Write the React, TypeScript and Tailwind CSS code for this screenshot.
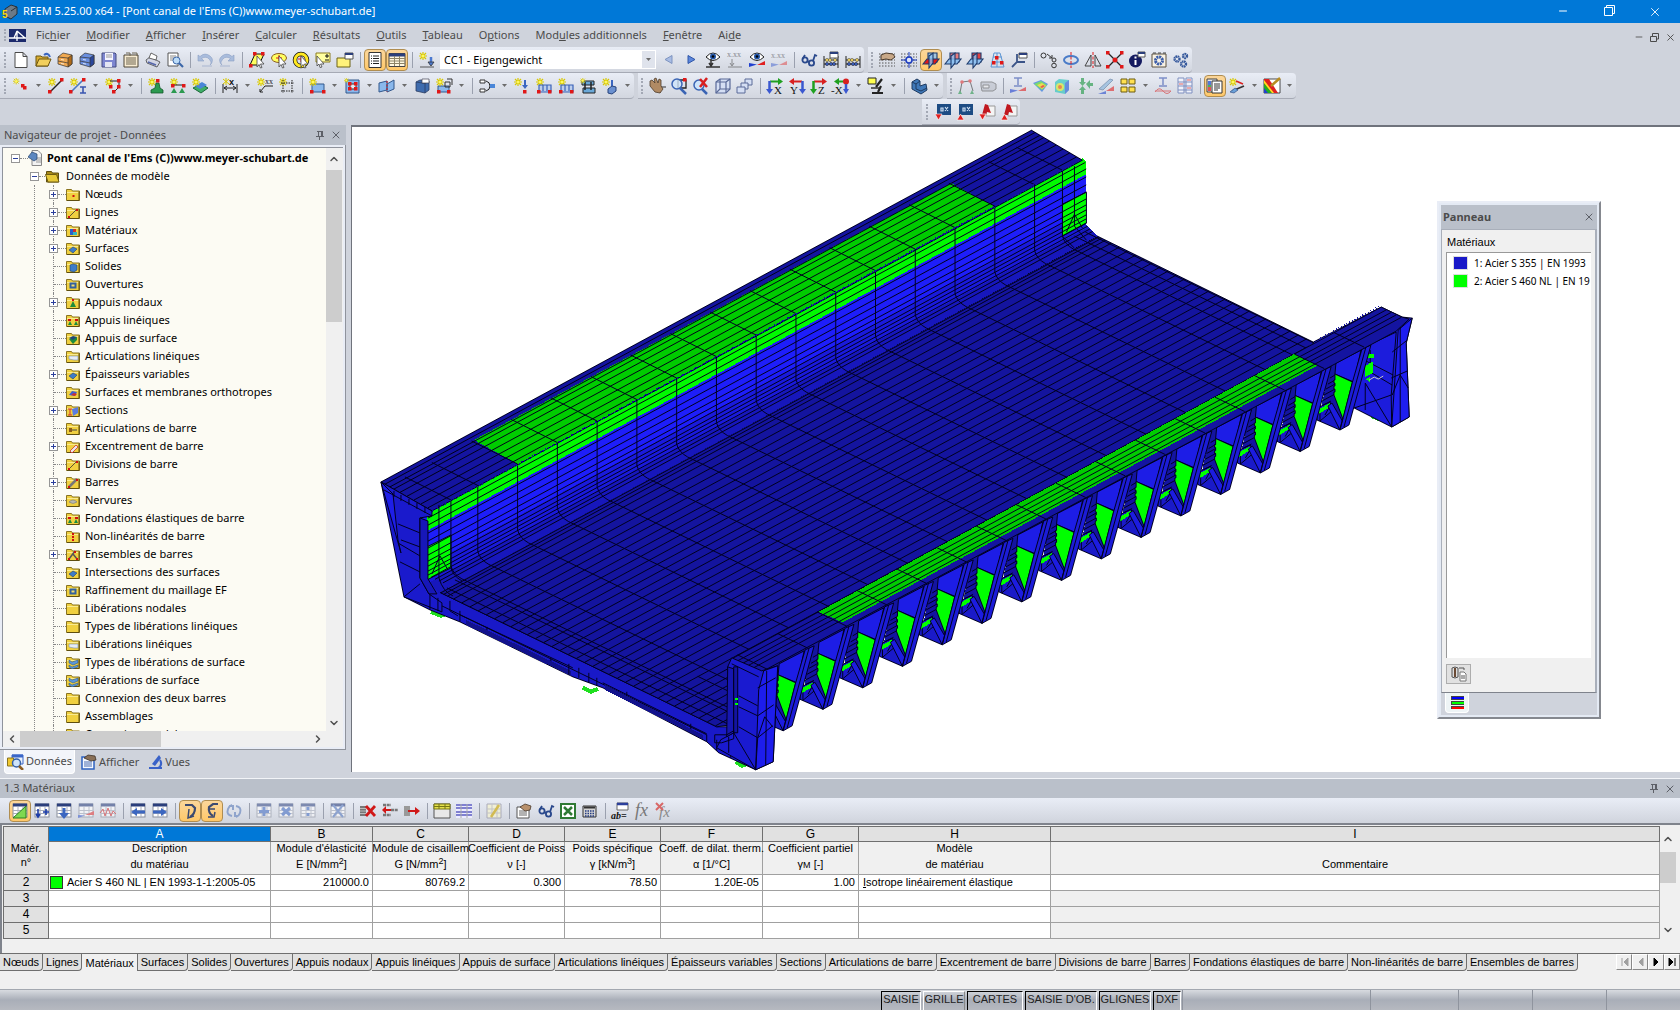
import type { ReactNode } from "react"
import { ChevronDown, ChevronLeft, ChevronRight, ChevronUp, Minus, X } from "lucide-react"

/* ---------- icon parts ---------- */

const Star = () => (
  <g stroke="#d8c800" strokeWidth="1.2">
    <path d="M4 0v8M0 4h8M1 1l6 6M7 1L1 7" />
    <circle cx="4" cy="4" r="1.5" fill="#fff860" stroke="none" />
  </g>
)

const Node = ({ x, y }: { x: number; y: number }) => <rect x={x} y={y} width="3.5" height="3.5" fill="#e01818" />

const Dots = () => (
  <path d="M0 2h16M0 5h16M0 8h16M0 11h16M0 14h16" stroke="#555" strokeDasharray="1.5 1.5" strokeWidth="1" />
)

const Sheet = ({ fill = "#fff" }: { fill?: string }) => (
  <g>
    <rect x="1" y="1" width="14" height="13" fill={fill} stroke="#8a8f9c" />
    <path d="M1 2h14" stroke="#2b3f7c" strokeWidth="3" />
    <path d="M1 7.500h14M1 10.500h14M6 4v10M11 4v10" stroke="#a9aebb" />
  </g>
)

const Cabinet = ({ a, b }: { a: string; b: string }) => (
  <g stroke="#333" strokeWidth=".7">
    <path d="M1 5l5-4 9 2v9l-4 3-10-3z" fill={a} />
    <path d="M11 6l4-3v9l-4 3z" fill={b} />
    <path d="M1 5l10 1M1 9l10 2" />
    <path d="M4 7.500l3 .5M4 11.500l3 .5" stroke="#fff" />
  </g>
)

const Box3d = ({ fill = "#5b8ac6" }: { fill?: string }) => (
  <g stroke="#2c3e62" strokeWidth=".8">
    <path d="M2 4l4-2 9 1v9l-4 3-9-2z" fill={fill} />
    <path d="M2 4l9 1.500V15M11 5.500L15 3" fill="none" />
  </g>
)

const Arrows = ({ a, b }: { a: string; b: string }) => (
  <g>
    <path d="M3 3.500h9" stroke={a} strokeWidth="2" />
    <path d="M11 0l5 3.500L11 7z" fill={a} />
    <path d="M2.500 3v9" stroke={b} strokeWidth="2.500" />
    <path d="M-1 11h7l-3.500 5z" fill={b} />
  </g>
)

const AxisName = ({ x, t }: { x: number; t: string }) => (
  <text x={x} y="16" fontSize="11" fontFamily="Liberation Serif" fill="#111">{t}</text>
)

const Planes = ({ a, b }: { a: string; b: string }) => (
  <g stroke="#1c3a6c" strokeWidth="1.100">
    <path d="M5 1h9v9H5z" fill={b} fillOpacity=".8" />
    <path d="M0 12l4-5h12l-4 5z" fill={a} />
    <path d="M6 4l4-3v10l-4 5z" fill="#8fc0f0" fillOpacity=".8" />
  </g>
)

const Eye = () => (
  <g>
    <path d="M1 5q7-8 14 0q-7 7-14 0z" fill="#fff" stroke="#222" />
    <circle cx="8" cy="4.500" r="3" fill="#2456a8" />
    <circle cx="8" cy="4.500" r="1.300" fill="#000" />
  </g>
)

const Abacus = () => (
  <g>
    <path d="M1 4v12M15 4v12M1 8h14M1 12h14" stroke="#222" />
    <g fill="#f0d060" stroke="#554" strokeWidth=".6"><circle cx="4" cy="8" r="1.600" /><circle cx="7" cy="8" r="1.600" /><circle cx="12" cy="8" r="1.600" /></g>
    <g fill="#3960c0" stroke="#223" strokeWidth=".6"><circle cx="4" cy="12" r="1.600" /><circle cx="8" cy="12" r="1.600" /><circle cx="11" cy="12" r="1.600" /></g>
  </g>
)

const Cursor = () => <path d="M8 4l7 8h-3.500l1.500 3.500-1.500.5-1.500-3.500L8 15z" fill="#fff" stroke="#444" strokeWidth=".8" />

const Arrow = ({ d = "M2 8h12" }: { d?: string }) => <path d={d} stroke="#3b66c0" strokeWidth="3" fill="none" />

const Glasses = () => (
  <g fill="none" stroke="#29488c" strokeWidth="1.800">
    <circle cx="4" cy="8" r="2.600" />
    <circle cx="10.500" cy="11" r="2.600" />
    <path d="M1.500 7L4 3M12 9l2-6 2 1M6.500 9L8 10" />
  </g>
)

const LoadFrame = () => (
  <g>
    <Star />
    <path d="M3 7h12v7H3zM7 7v6M11 7v6" fill="#9dbcf0" fillOpacity=".5" stroke="#3a62b8" strokeWidth="1.200" />
    <Node x={1} y={12} />
    <Node x={12} y={12} />
  </g>
)

/* toolbar icons, keyed by the command they stand for */
const icons: Record<string, ReactNode> = {
  Nouveau: <path d="M2 .5h8l4 4v11H2zM10 .5v4h4" fill="#fff" stroke="#4a4a4a" />,
  Ouvrir: (
    <g>
      <path d="M1 4h5l1 1h6v9H1z" fill="#d8ac30" stroke="#6b5410" />
      <path d="M1 14l3-7h12l-3 7z" fill="#f2cf5c" stroke="#6b5410" />
      <path d="M9 3q4-3 6 2" stroke="#3b66c0" strokeWidth="2" fill="none" />
    </g>
  ),
  "Gestionnaire de projets": <Cabinet a="#f0a850" b="#b06a18" />,
  "Gestionnaire de blocs": <Cabinet a="#6a8fe0" b="#2b479c" />,
  Enregistrer: (
    <g>
      <path d="M1 1h13l1 1v13H1z" fill="#7d86d0" stroke="#444a80" />
      <path d="M4 1h8v7H4z" fill="#f4f4ff" />
      <path d="M5 3h6M5 5h6" stroke="#999" />
      <path d="M4 10h7v5H4z" fill="#e4e6f4" />
    </g>
  ),
  Bordereau: (
    <g>
      <path d="M1 3h14v12H1z" fill="#f8ecd2" stroke="#4d4434" />
      <path d="M3 1h4v3M9 1h5v3M3 6h10M3 8h10M3 10h10M3 12h10" stroke="#6d6450" fill="none" />
    </g>
  ),
  Imprimer: (
    <g stroke="#444" strokeWidth=".8">
      <path d="M1 8l4-3 10 5-3 5-10-4z" fill="#d3d6e4" />
      <path d="M4 6l2-5 6 3-1 4z" fill="#fff" />
      <path d="M3 10l8 3" stroke="#5566aa" strokeWidth="1.500" />
    </g>
  ),
  "Aperçu": (
    <g>
      <path d="M1 1h10v13H1z" fill="#fff" stroke="#555" />
      <path d="M3 4h6M3 6h4M3 8h3" stroke="#888" />
      <circle cx="9.500" cy="8.500" r="3.500" fill="#bcdcf8" stroke="#3b66a8" />
      <path d="M12 11l4 4" stroke="#3b66a8" strokeWidth="2.200" />
    </g>
  ),
  Annuler: <path d="M1 3v6h6L4.500 6.500q5-3 8 1T13 13q5-5 0-9T3 4.500zM5 14h10" fill="#a9bcdc" stroke="#8ba0c4" strokeWidth=".6" />,
  "Rétablir": <path d="M15 3v6H9l2.500-2.500q-5-3-8 1T3 13q-5-5 0-9t10 .5zM1 14h10" fill="#a9bcdc" stroke="#8ba0c4" strokeWidth=".6" />,
  "Sélection parallélogramme": (
    <g>
      <path d="M1 13L6 2h9l-5 11z" fill="#ffff60" stroke="#111" />
      <Node x={4} y={0} /><Node x={12} y={0} /><Node x={0} y={12} />
      <Cursor />
    </g>
  ),
  "Sélection ellipse": (
    <g>
      <ellipse cx="8" cy="6" rx="7.500" ry="4.500" fill="#ffff60" stroke="#8c5c20" />
      <path d="M8 3v6M5 6h6" stroke="#e01818" />
      <Cursor />
    </g>
  ),
  "Sélection cercle": (
    <g>
      <circle cx="8" cy="8" r="6" fill="none" stroke="#111" strokeWidth="4.500" />
      <circle cx="8" cy="8" r="6" fill="none" stroke="#ffe820" strokeWidth="3" />
      <path d="M8 4v6M5 7h6" stroke="#e01818" />
      <Cursor />
    </g>
  ),
  "Sélection ajout": (
    <g>
      <path d="M1 1h14v9H1z" fill="#ffffa0" stroke="#8c7c20" />
      <path d="M10 4h4M12 2v4M10 8h4" stroke="#111" />
      <path d="M2 4l7 8H5.500L7 15l-2 .5L4 12l-2 2z" fill="#fff" stroke="#444" strokeWidth=".8" />
    </g>
  ),
  "Sélection spéciale": (
    <g>
      <path d="M0 6h13v9H0z" fill="#fff27a" stroke="#6d6214" />
      <path d="M8 1h8v6H8z" fill="#fff" stroke="#555" />
      <path d="M8 2h8" stroke="#2b3f7c" strokeWidth="2" />
    </g>
  ),
  Navigateur: (
    <g>
      <path d="M2 .5h12v15H2z" fill="#fff" stroke="#333" />
      <path d="M6 4h6M6 6.500h6M6 9h6M6 11.500h6M4 4h1M4 6.500h1M4 9h1M4 11.500h1" stroke="#222" />
    </g>
  ),
  Tableaux: (
    <g>
      <path d="M0 1.500h16v13H0z" fill="#fff8e0" stroke="#444" />
      <path d="M0 3h16" stroke="#2b3f7c" strokeWidth="3" />
      <path d="M0 6.500h16M0 9h16M0 11.500h16M5.500 4v10M10.500 4v10" stroke="#8d8468" />
    </g>
  ),
  "Nouveau cas de charge": (
    <g>
      <Star />
      <path d="M12 5v8" stroke="#4a78d0" strokeWidth="2.500" />
      <path d="M9 10h6l-3 4zM1 15h14" fill="#4a78d0" stroke="#333" strokeWidth=".8" />
    </g>
  ),
  "Précédent": <path d="M11 3.500v8L4 7.500z" fill="#a8bce4" stroke="#7e94c0" />,
  Suivant: <path d="M5 3.500v8l7-4z" fill="#5c86dc" stroke="#2f56a8" />,
  "Afficher charges": <g><Eye /><path d="M6 7v6M4 11l2 3 2-3M1 15h14" stroke="#333" strokeWidth="1.500" fill="none" /></g>,
  "Valeurs charges": (
    <g opacity=".55">
      <text x="0" y="5" fontSize="8" fontFamily="Liberation Serif" fill="#333">x.xx</text>
      <path d="M5 7v6M3 11l2 3 2-3M1 15h14" stroke="#444" fill="none" />
    </g>
  ),
  "Afficher résultats": (
    <g>
      <Eye />
      <path d="M0 15V11l8 1.500z" fill="#2040d0" />
      <path d="M8 13l8-4v4z" fill="#e02020" />
    </g>
  ),
  "Valeurs résultats": (
    <g opacity=".5">
      <text x="0" y="6" fontSize="8" fontFamily="Liberation Serif" fill="#333">x.xx</text>
      <path d="M0 15v-4l8 1.500z" fill="#4060d0" />
      <path d="M8 13l8-4v4z" fill="#e04040" />
    </g>
  ),
  Visionner: <Glasses />,
  "Paramètres de calcul": <g><Abacus /><path d="M7 0h8v6H7z" fill="#fff" stroke="#555" /><path d="M7 1h8" stroke="#2b3f7c" strokeWidth="2" /></g>,
  Calculer: <Abacus />,
  "Plan de travail": <g><Dots /><path d="M2 3l5-2 7 1 2 3-4 3-5-1-5 1z" fill="#c8a888" stroke="#4a3a2c" /></g>,
  "Grille ponctuelle": (
    <g>
      <Dots />
      <path d="M8 0v16M0 8h16" stroke="#1c3cc0" />
      <circle cx="8" cy="8" r="3" fill="#dfe6f8" stroke="#1c3cc0" strokeWidth="1.500" />
    </g>
  ),
  "Plan XY": <Planes a="#e01818" b="#8fc0f0" />,
  "Plan YZ": <Planes a="#8fc0f0" b="#e86060" />,
  "Plan XZ": <Planes a="#8fc0f0" b="#e01818" />,
  "Lignes guides": (
    <g>
      <path d="M2 15L5 1h6l4 14zM3 10h11M4 5h9M8 1v14" fill="none" stroke="#5a94d4" />
      <Node x={6} y={4} /><Node x={3} y={9} /><Node x={11} y={9} />
    </g>
  ),
  "Système de coordonnées": (
    <g>
      <path d="M6 2v8l-5 5M6 10h8" stroke="#3b5488" strokeWidth="1.800" fill="none" />
      <path d="M8 1h8v5H8z" fill="#fff" stroke="#555" />
      <path d="M8 2h8" stroke="#2b3f7c" strokeWidth="2" />
    </g>
  ),
  "Déplacer": (
    <g fill="none" stroke="#333">
      <circle cx="2.500" cy="3.500" r="2.500" /><circle cx="13" cy="8" r="2" /><circle cx="13" cy="13.500" r="2.300" />
      <path d="M6 2l5 4M11 3v3H8" />
    </g>
  ),
  Rotation: <g fill="none"><ellipse cx="8" cy="8" rx="7" ry="4" stroke="#4a7cc8" strokeWidth="2" /><path d="M8 0v16" stroke="#e01818" strokeDasharray="3 1.500" /></g>,
  Miroir: <g fill="none" stroke="#444"><path d="M6 3v11H0zM10 3v11h6z" /><path d="M8 0v16" stroke="#e01818" strokeDasharray="3 1.500" /></g>,
  Intersecter: (
    <g>
      <path d="M1 1l14 14M15 1L1 15" stroke="#222" strokeWidth="1.300" />
      <Node x={-1} y={-1} /><Node x={13} y={-1} /><Node x={-1} y={13} /><Node x={13} y={13} />
      <circle cx="8" cy="8" r="2.500" fill="#e01818" />
    </g>
  ),
  Informations: (
    <g>
      <circle cx="6.500" cy="9" r="6.500" fill="#141a60" />
      <path d="M6.500 8v5M6.500 4.500v2" stroke="#fff" strokeWidth="2" />
      <path d="M9 0h7v5H9z" fill="#fff" stroke="#555" />
      <path d="M9 1h7" stroke="#2b3f7c" strokeWidth="2" />
    </g>
  ),
  Afficher: (
    <g>
      <path d="M1 2h14v13H1z" fill="#f8f2e4" stroke="#5a5040" />
      <circle cx="8" cy="8.500" r="3.500" fill="none" stroke="#3a5ca8" strokeWidth="3" strokeDasharray="2 .7" />
      <path d="M2 1h3M7 1h3M12 1h3" stroke="#444" />
    </g>
  ),
  Options: (
    <g fill="none" stroke="#35589c" strokeWidth="2.400" strokeDasharray="1.500 .5">
      <circle cx="4" cy="7" r="2.500" /><circle cx="12" cy="4" r="2" /><circle cx="10.500" cy="12" r="2.500" />
    </g>
  ),
  "Nouveau nœud": <g><g transform="scale(.8)"><Star /></g><Node x={8} y={6} /><Node x={10} y={8} /></g>,
  "Nouvelle ligne": <g><Star /><path d="M2 14L14 2" stroke="#222" strokeWidth="1.400" /><Node x={0} y={12} /><Node x={12} y={0} /></g>,
  "Nouvelle barre": (
    <g>
      <Star />
      <path d="M1 14L13 2" stroke="#4a78c0" strokeWidth="1.600" />
      <Node x={-1} y={12} /><Node x={12} y={0} />
      <path d="M10 9h6M13 9v6M10 15h6" stroke="#3a56b0" strokeWidth="1.600" />
    </g>
  ),
  Polyligne: (
    <g>
      <Star />
      <path d="M5 3h9v6l-5 5" stroke="#222" fill="none" />
      <Node x={4} y={7} /><Node x={12} y={1} /><Node x={12} y={7} /><Node x={7} y={12} />
    </g>
  ),
  "Appui nodal": (
    <g>
      <Star />
      <path d="M8 5h3l1 5 3 2v3H3v-3l4-2z" fill="#2c9a50" stroke="#14582c" strokeWidth=".8" />
      <Node x={8} y={1} />
    </g>
  ),
  "Appui linéique": (
    <g>
      <Star />
      <path d="M3 7h12" stroke="#222" /><Node x={1} y={6} /><Node x={12} y={6} />
      <path d="M4 10l-3 5h6zM12 10l-3 5h6z" fill="#2c9a50" />
    </g>
  ),
  "Appui surfacique": <g><path d="M1 10l8-4 7 4-7 5z" fill="#3fae68" stroke="#1c6838" /><path d="M3 8l7-4 5 3-7 4z" fill="#4a86d8" /><Star /></g>,
  Dimension: (
    <g>
      <path d="M1 6v9M15 6v9M2 10h12M5 8l-3 2 3 2M11 8l3 2-3 2" stroke="#222" fill="none" />
      <path d="M1 1l6 5M7 1L1 6M4 0v7" stroke="#d8c800" />
      <text x="7" y="7" fontSize="9" fontWeight="bold" fontFamily="Liberation Sans" fill="#111">x</text>
    </g>
  ),
  Commentaire: (
    <g>
      <Star />
      <text x="8" y="6" fontSize="8" fontFamily="Liberation Serif" fill="#222">xx</text>
      <path d="M3 14l5-6h8M3 14v-3M3 14h3" stroke="#222" fill="none" />
    </g>
  ),
  "Trame de lignes": <g><Star /><path d="M4 2v13M13 2v13M2 5h13M2 13h13" stroke="#222" strokeDasharray="1.500 1" /></g>,
  Surface: <g><path d="M3 6h12v8H3z" fill="#8ab8ec" stroke="#33588c" /><Star /><Node x={1} y={12} /><Node x={13} y={12} /></g>,
  Ouverture: <g><path d="M2 2h13v13H2z" fill="#8ab8ec" stroke="#33588c" /><path d="M6 6h6v5H6z" fill="#e4eaf4" stroke="#333" /><Node x={4} y={4} /><Node x={10} y={4} /><Node x={4} y={9} /><Node x={10} y={9} /><g transform="scale(.6)"><Star /></g></g>,
  "Surface intersection": <g><path d="M0 5l8-2v9l-8 2zM8 6l7-4v9l-7 3z" fill="#8ab8ec" stroke="#33588c" /><path d="M8 3v11" stroke="#e01818" strokeDasharray="2 1.500" /></g>,
  Solide: <g><Box3d fill="#3f6cae" /><path d="M8 1h7v4H8z" fill="#fff" stroke="#445" strokeWidth=".7" /></g>,
  "Nouveau solide": <g><path d="M2 8h11v6H2z" fill="#8ab8ec" stroke="#33588c" /><path d="M9 4h5v5H9zM11 1h5v6" fill="none" stroke="#333" /><Star /><Node x={1} y={12} /><Node x={11} y={12} /></g>,
  Excentrement: <g><path d="M1 2h5v3H1zM1 11h5v3H1z" fill="#fff" stroke="#333" /><path d="M7 3q4 1 4 5t-4 5" stroke="#222" fill="none" /><path d="M11 6h5v4h-5z" fill="#4a86d8" /></g>,
  "Charge nodale": <g><Star /><path d="M11 2v6" stroke="#3b66c0" strokeWidth="2" /><path d="M8 7h6l-3 4z" fill="#3b66c0" /><Node x={9} y={12} /></g>,
  "Charge de barre": <LoadFrame />,
  "Charge linéique": <LoadFrame />,
  "Charge surfacique": <g><path d="M2 3h12v4H2zM3 10h12v5H3z" fill="#6aa8d8" stroke="#222" /><path d="M5 4v8M11 4v8" stroke="#222" strokeWidth="1.500" /><g transform="scale(.7)"><Star /></g></g>,
  "Charge libre": <g><Star /><path d="M10 2v6" stroke="#3b66c0" strokeWidth="2" /><path d="M6 11l4-3 4 1v4l-4 3-4-1z" fill="#6a90d0" stroke="#26437c" /></g>,
  "Déplacer la vue": (
    <g>
      <path d="M11 3v12M6 9h11" stroke="#333" />
      <path d="M1 3l2-1 3 3-1-4 2-1 2 5 1-4 2 1v6l2 3-3 4-5-1-5-6z" fill="#b08a64" stroke="#4d3b2a" strokeWidth=".8" />
    </g>
  ),
  "Zoom fenêtre": <g><path d="M7 2h8v8H7z" fill="none" stroke="#222" strokeWidth="1.300" /><circle cx="6" cy="6" r="5" fill="#cde4fa" fillOpacity=".8" stroke="#3a64b4" strokeWidth="1.500" /><path d="M9 10l6 6" stroke="#3a64b4" strokeWidth="2.500" /><Node x={12} y={0} /></g>,
  "Zoom précédent": <g><circle cx="6" cy="7" r="5" fill="#cde4fa" stroke="#3a64b4" strokeWidth="1.500" /><path d="M9 11l5 5" stroke="#3a64b4" strokeWidth="2.500" /><path d="M7 1l7 8M14 0L7 9" stroke="#d82020" strokeWidth="2.500" /></g>,
  "Vue isométrique": <g fill="#d5dff4" stroke="#5a6a98" strokeWidth="1.200"><path d="M1 4l4-3h10v10l-4 4H1z" /><path d="M1 4h10v11M11 4l4-3M5 1v10l-4 4M5 11h10" fill="none" /></g>,
  "Vue en perspective": <g fill="#d5dff4" stroke="#5a6a98"><path d="M8 1h7v6H8z" /><path d="M4 5h7v6H4z" /><path d="M0 9h8v6H0z" /></g>,
  "Vue en X": <g><Arrows a="#20a020" b="#3b58d0" /><AxisName x={7} t="X" /></g>,
  "Vue en Y": <g><g transform="translate(16 0) scale(-1 1)"><Arrows a="#d82020" b="#3b58d0" /></g><AxisName x={1} t="Y" /></g>,
  "Vue en Z": <g><Arrows a="#d82020" b="#20a020" /><AxisName x={7} t="Z" /></g>,
  "Vue en -X": (
    <g>
      <path d="M5 3.500h8" stroke="#20a020" strokeWidth="2" />
      <path d="M6 0L1 3.500 6 7z" fill="#20a020" />
      <circle cx="13" cy="3.500" r="3" fill="#d82020" />
      <path d="M13 6v6" stroke="#3b58d0" strokeWidth="2.500" />
      <path d="M10 11h6l-3 5z" fill="#3b58d0" />
      <AxisName x={-2} t="-X" />
    </g>
  ),
  "Visibilités": <g><path d="M0 0h8v6H0z" fill="#ffff50" stroke="#222" /><path d="M14 1L8 9M4 15h11M13 8l-3 6" stroke="#222" strokeWidth="2.200" /><path d="M3 10h8" stroke="#333" strokeWidth="1.500" /></g>,
  Rendu: <g><path d="M1 4l5-3 3 2v5l6-2 1 6-6 4-9-5z" fill="#3f78b8" stroke="#1e3a60" /><path d="M1 4l4 2v5l5 2 6-3M5 6l4-3" stroke="#1e3a60" fill="none" /></g>,
  "Résultats structure": <g opacity=".6"><path d="M2 15L4 4l8-1 3 10" fill="none" stroke="#333" /><circle cx="4" cy="4" r="1.800" fill="#e03030" /><circle cx="12" cy="3" r="1.800" fill="#e03030" /><path d="M2 12l-2 4h4zM14 12l-2 4h4z" fill="#2c9a50" /></g>,
  Animation: <g opacity=".55"><path d="M1 4h11l4 2v5l-3 2H2L1 8z" fill="#b8bcc6" stroke="#555" /><path d="M3 7h6v3H3z" fill="#eee" stroke="#555" /></g>,
  "Efforts internes": <g opacity=".6"><path d="M4 0h8M8 0v7M4 8h8" stroke="#3a56b0" strokeWidth="1.500" /><path d="M0 15v-4l8 1.500z" fill="#2040d0" /><path d="M8 13l8-4v4z" fill="#e02020" /></g>,
  "Résultats surfaces": <g opacity=".75"><path d="M1 5l8-3 7 4-6 8z" fill="#3c80e0" /><path d="M2 6l7-3 6 4-5 5z" fill="#58d848" /><path d="M5 7l5-2 4 3-4 3z" fill="#f0d820" /><path d="M8 9l3-2 2 1-3 2z" fill="#e83020" /></g>,
  "Résultats solides": <g opacity=".75"><path d="M1 4l4-3 10 1v10l-4 4-10-2z" fill="#40c8c0" /><path d="M11 5l4-3v10l-4 4z" fill="#4070d8" /><circle cx="6" cy="9" r="4" fill="#d8e840" /><circle cx="6" cy="9" r="2" fill="#f06820" /></g>,
  "Réactions": <g fill="#48a868" opacity=".8"><path d="M5 0h3v4h2l-3.500 4L3 4h2zM10 6l4-4v3h3v3h-3v3zM5 16v-4H3l3.500-4 3.500 4H8v4z" /></g>,
  "Contraintes": <g opacity=".7"><path d="M1 11L12 1l3 1L5 12z" fill="#8fb8dc" stroke="#4a6a90" strokeWidth=".7" /><path d="M0 16l8-3v3z" fill="#4060d0" /><path d="M8 13l8-5v5z" fill="#e04040" /></g>,
  "Fenêtres": <g fill="#ffe050" stroke="#6d5d10"><path d="M1 1h6v5H1zM9 1h6v5H9zM1 9h6v5H1zM9 9h6v5H9z" /></g>,
  "Diagramme": <g opacity=".6"><path d="M4 0h8M8 0v7M4 8h8" stroke="#3a56b0" strokeWidth="1.500" /><path d="M0 14q4-6 8-1t8 0M0 13h16" stroke="#d83030" fill="none" /></g>,
  "Palette": <g stroke="#7f8fc0" fill="#f0f2fa"><path d="M1 0h6v15H1zM9 0h6v15H9zM1 4h14M1 8h14M1 12h14" /><path d="M2 6h4M10 2h4M10 10h4" stroke="#e06060" /></g>,
  "Panneau de contrôle": (
    <g>
      <path d="M0 1h10v13H0z" fill="#e8e8e8" stroke="#444" />
      <path d="M1 4h3M1 6h3" stroke="#2050d0" strokeWidth="1.500" />
      <path d="M1 8h3" stroke="#20a020" strokeWidth="1.500" />
      <path d="M1 10h3M1 12h3" stroke="#e02020" strokeWidth="1.500" />
      <path d="M5 3h10v12H5z" fill="#fff" stroke="#333" />
      <path d="M7 6h6M7 8h6M7 10h6M7 12h4" stroke="#333" />
    </g>
  ),
  "Coupe": <g><Star /><path d="M7 3l7 3" stroke="#d82020" strokeWidth="1.500" /><path d="M3 13L15 8" stroke="#333" strokeWidth="1.800" /><path d="M1 14l5-4 3 2-4 3z" fill="#6aa0d8" stroke="#26437c" strokeWidth=".6" /></g>,
  "Échelle de couleurs": (
    <g>
      <path d="M0 1h16v14H0z" fill="#fff" stroke="#222" strokeWidth=".8" />
      <path d="M0 1h5l9 14H0z" fill="#e02020" />
      <path d="M0 5l8 10H0z" fill="#20b020" />
      <path d="M0 10l4 5H0z" fill="#2040d0" />
      <path d="M0 2l10 13H8L0 5z" fill="#ffe020" />
      <path d="M7 8l9-8" stroke="#b88c20" strokeWidth="2.500" />
    </g>
  ),
  "Exporter bas": <g><path d="M2 0h14v11H2z" fill="#1d4c84" /><path d="M6 4h2v3H6zM10 3l3 4M13 3l-3 4" stroke="#cfe0f4" strokeWidth="1.200" /><path d="M0 10h7l-3.500 6z" fill="#e02020" stroke="#fff" strokeWidth=".6" /></g>,
  "Exporter haut": <g><path d="M2 0h14v11H2z" fill="#1d4c84" /><path d="M6 4h2v3H6zM10 3l3 4M13 3l-3 4" stroke="#cfe0f4" strokeWidth="1.200" /><path d="M0 16h7l-3.500-6z" fill="#e02020" stroke="#fff" strokeWidth=".6" /></g>,
  "Importer CAO": <g><path d="M7 2h9v10H7z" fill="#f4f4f4" stroke="#999" /><path d="M3 11L6 0l3 1 3 8-4-1-1 3z" fill="#c01820" /><path d="M0 10h7l-3.500 6z" fill="#e02020" stroke="#fff" strokeWidth=".6" /></g>,
  "Exporter CAO": <g><path d="M7 2h9v10H7z" fill="#f4f4f4" stroke="#999" /><path d="M3 11L6 0l3 1 3 8-4-1-1 3z" fill="#c01820" /><path d="M0 16h7l-3.500-6z" fill="#e02020" stroke="#fff" strokeWidth=".6" /></g>,
  "Mode édition": <g><Sheet /><path d="M1 15L14 3v12z" fill="#7ed850" stroke="#2c8020" /></g>,
  "Insérer ligne": <g><Sheet /><path d="M4 6v8M2 11l2 3 2-3M9 9h6M12 6v6" stroke="#1c3ca8" strokeWidth="1.600" fill="none" /></g>,
  "Charger": <g><Sheet /><Arrow d="M8 5v6" /><path d="M3 10h10l-5 6z" fill="#3b66c0" /></g>,
  "Tableau résultats": <g opacity=".6"><Sheet /><path d="M0 15v-3l7 .5z" fill="#4060d0" /><path d="M7 12l9-4v4z" fill="#e04040" /></g>,
  "Courbe résultats": <g opacity=".6"><Sheet /><path d="M0 10l3-4 2 7 3-8 3 8 2-5 3 3" stroke="#d83030" fill="none" /></g>,
  "Colonne précédente": <g><Sheet /><Arrow d="M6 9h9" /><path d="M7 5v8L1 9z" fill="#3b66c0" /></g>,
  "Colonne suivante": <g><Sheet /><Arrow d="M1 9h9" /><path d="M9 5v8l6-4z" fill="#3b66c0" /></g>,
  "Sens sélection": <g><path d="M3 2h7l3 3q0 6-5 9" stroke="#3c4a70" strokeWidth="2.200" /><path d="M7 6l-1 9 6-2" stroke="#3c4a70" strokeWidth="1.500" /></g>,
  "Sens tableau": <g><path d="M14 1H9L5 4q-1 6 4 9" stroke="#3c4a70" strokeWidth="2.200" /><path d="M5 6h6M4 14h6l1-5" stroke="#3c4a70" strokeWidth="1.500" /></g>,
  "Synchroniser": <path d="M6 13Q0 12 2 6q1-3 4-4M10 3q6 1 4 7-1 3-4 4M3 3h4v4M13 13H9V9" stroke="#8fa4cc" strokeWidth="2" fill="none" />,
  "Ajouter": <g opacity=".55"><Sheet /><Arrow d="M8 4v9M3 8.500h10" /></g>,
  "Multiplier": <g opacity=".55"><Sheet /><Arrow d="M4 5l8 7M12 5l-8 7" /></g>,
  "Diviser": <g opacity=".55"><Sheet /><Arrow d="M8 4v3M8 10v3" /></g>,
  "Effacer sélection": <g opacity=".6"><Sheet /><path d="M3 2l10 12M13 2L3 14" stroke="#5a7cc0" strokeWidth="2" /></g>,
  "Supprimer ligne": <g><path d="M0 3h6v10H0z" fill="#777" /><path d="M0 5.500h6M0 8h6M0 10.500h6" stroke="#bbb" /><path d="M6 3l9 10M15 3L6 13" stroke="#d01818" strokeWidth="2.800" /></g>,
  "Insérer colonne": <g><path d="M9 7h7M1 12h8M1 2h8" stroke="#777" strokeWidth="2.500" strokeDasharray="3 .7" /><path d="M3 7h6" stroke="#d01818" strokeWidth="2" /><path d="M4 3v8L0 7z" fill="#d01818" /></g>,
  "Enlever colonne": <g><path d="M0 3h6v10H0z" fill="#999" /><path d="M4 8h8" stroke="#d01818" strokeWidth="2" /><path d="M11 4v8l5-4z" fill="#d01818" /></g>,
  "Colorer": <g><path d="M0 1h16v14H0z" fill="#e8e8e8" stroke="#555" /><path d="M0 1h16v5H0z" fill="#e4e04c" stroke="#777714" /><path d="M0 3.500h16M5 1v5M11 1v5" stroke="#777714" /></g>,
  "Colorer lignes": <g><path d="M0 1h16v14H0z" fill="#ececff" /><path d="M0 2h16M0 5h16M0 9h16M0 12h16" stroke="#7f80d0" strokeWidth="2.200" /><path d="M5 1v14M11 1v14" stroke="#aaa" /></g>,
  "Modifier cellule": <g opacity=".75"><path d="M1 1h14v14H1z" fill="#f5f3d0" stroke="#99a" /><path d="M1 6h14M1 10h14M6 1v14M11 1v14" stroke="#bbb" /><path d="M5 14l8-12" stroke="#d0b020" strokeWidth="2.500" /></g>,
  "Réglages tableau": <g><path d="M1 4h12v11H1z" fill="#fff" stroke="#555" /><path d="M3 8h8M3 10h8M3 12h8" stroke="#666" /><path d="M4 4l5-3 6 2-1 4-5 1z" fill="#b8906c" stroke="#4a3a2c" strokeWidth=".8" /></g>,
  "Vue tableau": <Glasses />,
  "Exporter Excel": <g><path d="M1 1h14v14H1z" fill="#fff" stroke="#2f7a34" strokeWidth="2" /><path d="M4 4l8 8M12 4l-8 8" stroke="#2f7a34" strokeWidth="2.500" /></g>,
  "Calculatrice": <g><path d="M1 3h13v11H1z" fill="#d4d4d4" stroke="#333" /><path d="M2 4.500h11" stroke="#333" strokeWidth="2" /><path d="M3 8h10M3 10.500h10M3 13h10" stroke="#223a80" strokeWidth="1.500" strokeDasharray="1.500 1" /></g>,
  "Paramètres": (
    <g>
      <path d="M5 0h11v7H5z" fill="#fff" stroke="#666" />
      <path d="M5 1h11" stroke="#2b3f9c" strokeWidth="2.500" />
      <text x="-1" y="16" fontSize="10" fontStyle="italic" fontWeight="bold" fontFamily="Liberation Serif" fill="#111">ab=</text>
    </g>
  ),
  "Formule": <text x="1" y="13" fontSize="18" fontStyle="italic" fontFamily="Liberation Serif" fill="#777">fx</text>,
  "Supprimer formule": (
    <g>
      <text x="3" y="14" fontSize="15" fontStyle="italic" fontFamily="Liberation Serif" fill="#888">fx</text>
      <path d="M0 0l7 7M7 0L0 7" stroke="#d86868" strokeWidth="2" />
    </g>
  ),
}

/* "|" = separator, leading "*" = pressed, leading "+" = with drop-down arrow */
const fileBar = [
  "Nouveau", "Ouvrir", "Gestionnaire de projets", "Gestionnaire de blocs", "Enregistrer", "Bordereau", "Imprimer", "Aperçu", "|",
  "Annuler", "Rétablir", "|", "Sélection parallélogramme", "Sélection ellipse", "Sélection cercle", "Sélection ajout", "Sélection spéciale", "|",
  "*Navigateur", "*Tableaux", "|", "Nouveau cas de charge",
]
const loadBar = [
  "Précédent", "Suivant", "Afficher charges", "Valeurs charges", "Afficher résultats", "Valeurs résultats", "|",
  "Visionner", "Paramètres de calcul", "Calculer",
]
const planeBar = [
  "Plan de travail", "Grille ponctuelle", "*Plan XY", "Plan YZ", "Plan XZ", "Lignes guides", "Système de coordonnées", "|",
  "Déplacer", "Rotation", "Miroir", "Intersecter", "Informations", "Afficher", "Options",
]
const insertBar = [
  "+Nouveau nœud", "Nouvelle ligne", "+Nouvelle barre", "+Polyligne", "|", "Appui nodal", "Appui linéique", "Appui surfacique", "|",
  "+Dimension", "Commentaire", "Trame de lignes", "|", "+Surface", "+Ouverture", "+Surface intersection", "Solide", "+Nouveau solide", "|",
  "+Excentrement", "Charge nodale", "Charge de barre", "Charge linéique", "Charge surfacique", "+Charge libre",
]
const viewBar = [
  "Déplacer la vue", "Zoom fenêtre", "Zoom précédent", "Vue isométrique", "Vue en perspective", "|",
  "Vue en X", "Vue en Y", "Vue en Z", "+Vue en -X", "+Visibilités", "|", "+Rendu",
]
const resultBar = [
  "Résultats structure", "Animation", "|", "Efforts internes", "Résultats surfaces", "Résultats solides", "Réactions", "Contraintes",
  "+Fenêtres", "Diagramme", "Palette", "|", "*Panneau de contrôle", "+Coupe", "+Échelle de couleurs",
]
const exportBar = ["Exporter bas", "Exporter haut", "Importer CAO", "Exporter CAO"]
const tableBar = [
  "*Mode édition", "Insérer ligne", "Charger", "Tableau résultats", "Courbe résultats", "|", "Colonne précédente", "Colonne suivante", "|",
  "*Sens sélection", "*Sens tableau", "Synchroniser", "|", "Ajouter", "Multiplier", "Diviser", "|", "Effacer sélection", "|",
  "Supprimer ligne", "Insérer colonne", "Enlever colonne", "|", "Colorer", "Colorer lignes", "|", "Modifier cellule", "|",
  "Réglages tableau", "Vue tableau", "Exporter Excel", "Calculatrice", "|", "Paramètres", "Formule", "Supprimer formule",
]

function Tools({ items }: { items: string[] }) {
  return (
    <>
      {items.map((raw, i) => {
        if (raw === "|") {
          return (
            <span key={i} className="flex w-2 shrink-0 justify-center">
              <span className="h-4 w-px bg-[#9aa0ae]" />
            </span>
          )
        }
        const on = raw[0] === "*"
        const drop = raw[0] === "+"
        const name = on || drop ? raw.slice(1) : raw
        return (
          <span key={i} className="flex shrink-0 items-center">
            <button
              aria-label={name}
              className={
                on
                  ? "flex h-[22px] w-[22px] items-center justify-center rounded-sm border border-[#b08d50] bg-gradient-to-b from-[#fbd69a] to-[#ffc868]"
                  : "flex h-[22px] w-[22px] items-center justify-center"
              }
            >
              <svg width="16" height="16" viewBox="0 0 16 16" fill="none" className="shrink-0 overflow-visible">
                {icons[name]}
              </svg>
            </button>
            {drop && (
              <button aria-label={`${name} : options`} className="flex w-[13px] items-center justify-center">
                <svg width="5" height="3" viewBox="0 0 5 3"><path d="M0 0h5L2.500 3z" fill="#6c6c6c" /></svg>
              </button>
            )}
          </span>
        )
      })}
    </>
  )
}

function Bar({ first, children }: { first?: boolean; children: ReactNode }) {
  return (
    <div className="flex h-[26px] shrink-0 items-center rounded-r border-b border-[#a6aab5] bg-gradient-to-b from-[#e9edf6] to-[#d2d6df]">
      <span className={first ? "flex w-[10px] justify-center" : "flex w-2 justify-center"}>
        <span className="h-4 w-0 border-l-2 border-dotted border-[#a3a8b4]" />
      </span>
      {children}
    </div>
  )
}

/* ---------- project tree ---------- */

const folderMarks: Record<string, ReactNode> = {
  dot: <rect x="6.500" y="7" width="2" height="2" fill="#d01010" />,
  line: <g><path d="M3 11l8-8" stroke="#333" strokeWidth=".8" /><path d="M2 10h2v2H2zM10 3h2v2h-2z" fill="#d01010" /></g>,
  mat: <g><path d="M4 5h3v6H4z" fill="#2a60c8" /><path d="M7 5h3v3H7z" fill="#d03030" /><path d="M7 8h4v3H7z" fill="#30b8c0" /></g>,
  surf: <path d="M3 8l4-3 4 2-4 4z" fill="#3d7cc8" stroke="#204070" strokeWidth=".6" />,
  solid: <path d="M4 5l3-1 4 1v5l-3 2-4-1z" fill="#3d7cc8" stroke="#204070" strokeWidth=".6" />,
  hole: <path d="M4.500 5.500h5v4h-5z" fill="#f0dc70" stroke="#33609c" strokeWidth="2" />,
  supp: <g><path d="M7 5l-3 6h6z" fill="#1c8c3c" /><path d="M6 3h2v2H6z" fill="#d01010" /></g>,
  suppl: <g><path d="M4 7l-2 4h4zM10 7l-2 4h4z" fill="#1c8c3c" /><path d="M2 5h3v2H2zM9 5h3v2H9z" fill="#d01010" /></g>,
  supps: <g><path d="M3 7l8-2v3l-4 4z" fill="#1c8c3c" /><path d="M3 6l4-2 4 1-4 3z" fill="#204878" /></g>,
  paper: <path d="M3 6h9v4H8L3 9z" fill="#e6ecf4" stroke="#7a90b0" strokeWidth=".6" />,
  ortho: <g><path d="M3 9l3-4 5 1-2 4z" fill="#4060d0" /><path d="M5 9l3-2 3 1-2 2z" fill="#d03030" /></g>,
  sect: <g><path d="M6 5l6-2v6l-5 3z" fill="#5a7ce0" /><path d="M2 5h4M4 5v6M2 11h4" stroke="#d03030" /></g>,
  hinge: <g><path d="M4 8h7" stroke="#444" /><path d="M3 6h3v4H3z" fill="#8c5c18" /></g>,
  ecc: <path d="M4 11l6-6 2 2-6 6z" fill="#e8e8e8" stroke="#d03030" strokeWidth=".8" />,
  set: <g><path d="M3 11l6-8M7 6l4 5" stroke="#555" strokeWidth="1.500" /><path d="M2 10h2v2H2zM8 3h2v2H8zM10 10h2v2h-2z" fill="#d01010" /></g>,
  bar: <g><path d="M3 11l8-8" stroke="#777" strokeWidth="2.500" /><path d="M2 10h2v2H2zM10 3h2v2h-2z" fill="#d01010" /></g>,
  rib: <path d="M3 8q4-4 8 0q-4 3-8 0z" fill="#b8b8b0" stroke="#777" strokeWidth=".6" />,
  nonl: <path d="M7 3v9" stroke="#d01010" strokeWidth="2" strokeDasharray="2 1" />,
  release: <path d="M3 4l3 2 6-2v3l-5 2-4-2zM3 9l3 2 6-2v2l-6 2-3-2z" fill="#5a98dc" stroke="#204878" strokeWidth=".5" />,
}

const tree: { t: string; m?: string; plus?: boolean }[] = [
  { t: "Nœuds", m: "dot", plus: true },
  { t: "Lignes", m: "line", plus: true },
  { t: "Matériaux", m: "mat", plus: true },
  { t: "Surfaces", m: "surf", plus: true },
  { t: "Solides", m: "solid" },
  { t: "Ouvertures", m: "hole" },
  { t: "Appuis nodaux", m: "supp", plus: true },
  { t: "Appuis linéiques", m: "suppl" },
  { t: "Appuis de surface", m: "supps" },
  { t: "Articulations linéiques", m: "paper" },
  { t: "Épaisseurs variables", m: "surf", plus: true },
  { t: "Surfaces et membranes orthotropes", m: "ortho" },
  { t: "Sections", m: "sect", plus: true },
  { t: "Articulations de barre", m: "hinge" },
  { t: "Excentrement de barre", m: "ecc", plus: true },
  { t: "Divisions de barre", m: "line" },
  { t: "Barres", m: "bar", plus: true },
  { t: "Nervures", m: "rib" },
  { t: "Fondations élastiques de barre", m: "suppl" },
  { t: "Non-linéarités de barre", m: "nonl" },
  { t: "Ensembles de barres", m: "set", plus: true },
  { t: "Intersections des surfaces", m: "surf" },
  { t: "Raffinement du maillage EF", m: "hole" },
  { t: "Libérations nodales" },
  { t: "Types de libérations linéiques" },
  { t: "Libérations linéiques", m: "paper" },
  { t: "Types de libérations de surface", m: "release" },
  { t: "Libérations de surface", m: "release" },
  { t: "Connexion des deux barres" },
  { t: "Assemblages" },
  { t: "Connexions nodales", m: "dot" },
]

function Folder({ children }: { children?: ReactNode }) {
  return (
    <svg width="14" height="13" viewBox="0 0 14 13" className="shrink-0">
      <path d="M.5 1.500h5l1 1.500h7v9.500H.5z" fill="#f0d040" stroke="#8a7420" />
      <path d="M1 4.500h11.500" stroke="#faeb90" />
      <path d="M13 3.500v9H1" stroke="#5e4e10" fill="none" />
      {children}
    </svg>
  )
}

function Toggle({ plus }: { plus?: boolean }) {
  return (
    <button
      aria-label={plus ? "Développer" : "Réduire"}
      className="flex h-[9px] w-[9px] shrink-0 items-center justify-center border border-[#969696] bg-white"
    >
      <svg width="5" height="5" viewBox="0 0 5 5" shapeRendering="crispEdges">
        <path d={plus ? "M0 2h5v1H0zM2 0h1v5H2z" : "M0 2h5v1H0z"} fill="#2b3f9c" />
      </svg>
    </button>
  )
}

function ProjectTree() {
  return (
    <ul className="overflow-hidden pt-px pl-2 text-[11px] leading-[18px] whitespace-nowrap text-black">
      <li>
        <div className="flex h-[18px] items-center font-bold">
          <Toggle />
          <span className="w-2 shrink-0 border-t border-dotted border-[#888]" />
          <svg width="14" height="16" viewBox="0 0 14 16" className="mr-[5px] shrink-0">
            <path d="M4 .5h6l3.500 3.500v11.500H4z" fill="#f2f2f2" stroke="#888" />
            <path d="M8 8h5M8 10h5M8 12h5" stroke="#999" />
            <path d="M0 7l4-5 5 2v5l-3 2z" fill="#5b86c0" stroke="#26436c" strokeWidth=".7" />
          </svg>
          <span>Pont canal de l'Ems (C))www.meyer-schubart.de</span>
        </div>
        <ul className="pl-[19px]">
          <li>
            <div className="flex h-[18px] items-center">
              <Toggle />
              <span className="w-1.5 shrink-0 border-t border-dotted border-[#888]" />
              <svg width="15" height="13" viewBox="0 0 15 13" className="mr-1.5 shrink-0">
                <path d="M1.500 1.500h5l1 1.500h6v9h-12z" fill="#a88a18" stroke="#5e4e10" />
                <path d="M.5 4.500h11l2.500 7.500H3z" fill="#e6c838" stroke="#6e5c10" />
              </svg>
              Données de modèle
            </div>
            <ul className="ml-1 border-l border-dotted border-[#888] pl-[18px]">
              {tree.map((n) => (
                <li key={n.t} className="flex h-[18px] items-center border-l border-dotted border-[#888]">
                  {n.plus ? (
                    <span className="-ml-[5px] flex items-center">
                      <Toggle plus />
                      <span className="w-2 border-t border-dotted border-[#888]" />
                    </span>
                  ) : (
                    <span className="w-3 border-t border-dotted border-[#888]" />
                  )}
                  <Folder>{n.m && folderMarks[n.m]}</Folder>
                  <span className="ml-[5px]">{n.t}</span>
                </li>
              ))}
            </ul>
          </li>
        </ul>
      </li>
    </ul>
  )
}

function Pin() {
  return (
    <svg width="8" height="9" viewBox="0 0 8 9" shapeRendering="crispEdges">
      <path d="M1 0h6v1H1zM2 1h1v4H2zM5 1h2v4H5zM0 5h8v1H0zM3 6h1v3H3z" fill="#5d6068" />
    </svg>
  )
}

function Navigator() {
  return (
    <aside className="flex w-[346px] shrink-0 flex-col">
      <div className="flex h-5 items-center justify-between bg-[#bac0ca] pr-1 pl-1 text-[11px] text-[#4b4b4b]">
        <h2>Navigateur de projet - Données</h2>
        <span className="flex items-center gap-1.5">
          <button aria-label="Épingler"><Pin /></button>
          <button aria-label="Fermer le navigateur"><X size={12} color="#5d6068" /></button>
        </span>
      </div>
      <div className="flex min-h-0 flex-1 flex-col border-r border-b border-[#8f939c] bg-[#e9edf6] p-0.5">
        <div className="flex min-h-0 flex-1 border-t border-l border-[#8f939c]">
          <div className="flex min-w-0 flex-1 flex-col bg-[#fcfbf3]">
            <div className="min-h-0 flex-1 overflow-hidden">
              <ProjectTree />
            </div>
            <div className="flex h-4 shrink-0 items-center bg-[#f0f0f0]">
              <span className="flex w-[17px] justify-center"><ChevronLeft size={12} strokeWidth={3} color="#505050" /></span>
              <span className="h-full w-[141px] bg-[#cdcdcd]" />
              <span className="ml-auto flex w-[17px] justify-center"><ChevronRight size={12} strokeWidth={3} color="#505050" /></span>
            </div>
          </div>
          <div className="flex w-[17px] shrink-0 flex-col items-center bg-[#f0f0f0] pr-px pb-[15px]">
            <span className="flex h-[22px] items-center"><ChevronUp size={12} strokeWidth={3} color="#505050" /></span>
            <span className="h-[152px] w-full bg-[#cdcdcd]" />
            <span className="mt-auto flex h-[18px] items-center"><ChevronDown size={12} strokeWidth={3} color="#505050" /></span>
          </div>
        </div>
      </div>
      <div className="flex h-[28px] shrink-0 items-start gap-1 pl-1 text-[11px] text-[#4b4b4b]">
        <button className="flex h-6 items-center gap-0.5 rounded-b border border-t-0 border-white bg-[#f3f5fa] px-0.5">
          <svg width="17" height="16" viewBox="0 0 17 16">
            <path d="M5 1h11v9H5z" fill="#e8f0fc" stroke="#3a66c8" />
            <path d="M5 2h11" stroke="#3a66c8" strokeWidth="3" />
            <path d="M.5 4h6v8h-6z" fill="#f0c830" stroke="#8a7420" />
            <circle cx="9.500" cy="9" r="4" fill="#cfe4fa" stroke="#3460a8" strokeWidth="1.500" />
            <path d="M12 12l4 4" stroke="#8c5c20" strokeWidth="2.500" />
          </svg>
          Données
        </button>
        <button className="flex h-6 items-center gap-0.5 px-0.5">
          <svg width="16" height="16" viewBox="0 0 16 16">
            <path d="M1 3h12v12H1z" fill="#f4f8ff" stroke="#2e62c0" strokeWidth="1.500" />
            <path d="M3 8h8M3 10h8M3 12h8" stroke="#4a6cb0" />
            <path d="M3 4l4-3 7 1 1 4-5 1z" fill="#8a7058" stroke="#40342a" strokeWidth=".8" />
          </svg>
          Afficher
        </button>
        <button className="flex h-6 items-center gap-0.5 px-1">
          <svg width="14" height="16" viewBox="0 0 14 16">
            <path d="M10 1L3 10l3 2L12 4z" fill="#3a62c8" />
            <path d="M0 14h13M11 6q3 5-2 8" stroke="#3a62c8" strokeWidth="2" fill="none" />
          </svg>
          Vues
        </button>
      </div>
    </aside>
  )
}

/* ---------- structural model ---------- */

const SLOPE = -0.541
const CROSS = 0.484

// segment that follows the long axis of the bridge, from x1 to x2, through (px, py)
const along = (px: number, py: number, x1: number, x2: number) =>
  `M${x1} ${(py + SLOPE * (x1 - px)).toFixed(1)}L${x2} ${(py + SLOPE * (x2 - px)).toFixed(1)}`

const range = (n: number, from = 0) => Array.from({ length: n }, (_, i) => i + from)

// long lines of the deck: dense by the haunch, regular further out
const deckLines = [2, 5, 9, ...range(33).map((i) => 15 + i * 8.4)]
  .map((d) => {
    const s = d / (CROSS - SLOPE)
    return along(438 + s, 592 + CROSS * s, 438 + s, 1097 + s)
  })
  .join("")

const topLines = [4, 9, 13, 19, 26, 33, 40, 47]
  .map((s) => along(380 + s, 482 + s * 0.55, 380 + s, 1031 + s))
  .join("")

const wallLines = [6, 13, 21, 29, 36, 43, 49, 54, 59, 63, 67, 71, 75, 79]
  .map((d) => along(431, 510 + d, 427 + Math.max(0, d - 64), 1086 + Math.max(0, d - 66)))
  .join("")

const frames = [...range(15, -1).map((i) => [994.3 - 39.8 * i, 206 + 21.5 * i]), [450, 500], [1062, 170]]
const frameLines = frames
  .map(([x, y]) => `M${x - 46} ${y - 23}L${x} ${y}v66q2 8 11 13l290 140`)
  .join("")

function Rib({ x, y }: { x: number; y: number }) {
  return (
    <g transform={`translate(${x} ${y})`}>
      <path d="M-10 -64L30 -86L9 -5L0 0L-21 -12z" fill="#1414a0" stroke="none" />
      <path d="M-23 -22L-10 -28L0 0L-23 -10z" fill="#1a1ac8" />
      <path d="M-4 -67L21 -80L14 -48L-5 -56z" fill="#1d1de6" />
      <path d="M-10 -52l5-3M-12 -46l7-4M-14 -41l9-5M-16 -35l11-6M-18 -29l13-7M-17 -25l8-4" fill="none" />
      <path d="M-5 -56L12.500 -48L3 -11L-6 -35v-3h1v-3h-1v-3h1v-3h-1v-3h1z" fill="#00ff00" />
      <path d="M-21 -21L-10 -27v4L-21 -16z" fill="#00ff00" stroke="none" />
      <path d="M-20 -17v8l12-10M-10 -24l-5 9" fill="none" />
      <path d="M-12 -24L-8 -27L3 -8L0 0z" fill="#1c1ce0" />
      <path d="M22 -81L31 -85L9 -5L0 0L12.500 -48z" fill="#1c1cd8" />
      <path d="M26 -83L4 -3M0 -1L3 -12" fill="none" />
    </g>
  )
}

function Model() {
  return (
    <svg
      viewBox="351 127 1329 645"
      role="img"
      aria-label="Modèle éléments finis du pont canal"
      shapeRendering="crispEdges"
      className="h-full w-full"
      stroke="#000022"
      strokeWidth="1"
      strokeLinejoin="round"
    >
      <defs>
        <clipPath id="deck"><path d="M438 592L1097 236L1313 342L1300 352L731 659L731 725L716 727z" /></clipPath>
        <clipPath id="inside"><path d="M380 482L1031 130L1086 163V225L1097 236L1330 350L731 660L731 727L716 727L438 594L426 579V515z" /></clipPath>
      </defs>

      {/* supports */}
      <path d="M430 612l10 4 6-2M582 688l8 4 7-3M735 762l6 4 6-2M1371 416l8 3" stroke="#20e020" strokeWidth="4" fill="none" />

      {/* deck edge, box girder below it */}
      <path d="M426 575L438 592L716 727L731 727L755 770L718 753L706 742L602 688L572 677L459 622L429 610L403 597z" fill="#1919c8" />
      <path d="M441 606L706 735M459 615L572 668M602 683L706 734M459 622V611M486 633v-6M550 664v-6M626 698v-6M690 730v-6" fill="none" />
      <path d="M465 620L570 671L570 676L465 625zM604 685L702 735L702 739L604 690z" fill="#12128c" stroke="none" />
      <path d="M449 601v10l8 5M568 664v11M578 668v10M588 673v10M596 678v8M706 735v7M716 740v11M730 745v13" fill="none" />

      {/* deck */}
      <path d="M438 592L1097 236L1313 342L1313 360L731 725L716 727z" fill="#14149e" />
      <g clipPath="url(#deck)">
        <path d={deckLines} fill="none" stroke="#00001e" />
      </g>

      {/* rear wall */}
      <path d="M419 518L1086 161V232L426 585z" fill="#1e1efa" stroke="none" />
      <path d="M426 579L1086 225L1097 236L438 593z" fill="#1717bc" stroke="none" />
      <path d="M426 565L1086 210V228L426 584z" fill="#1a1adc" stroke="none" />
      <path d="M426 513L1082 158l4 4v12L426 531z" fill="#00fa00" stroke="none" />
      <path d="M380 482L1031 130L1082 160L431 511z" fill="#1414a0" />
      <path d="M473 440L950.500 183L994 206L517 464z" fill="#00cc00" stroke="none" />
      <path d="M426 547L450 535V568L426 580zM1062 204L1086 192V223L1062 236z" fill="#00ff00" />
      <g clipPath="url(#inside)">
        <path d={topLines + wallLines} fill="none" stroke="#000018" />
        <path d={frameLines} fill="none" />
        <path d="M450 568q2 8 11 13M438 505v73q4 14 14 18M1074 166v60l12 14M1062 236l12 12M431 574l8-18 8 14M1066 232l8-18 8 14M454 580L744 720M446 588L735 728M1074 236L1310 350M1085 232L1318 345" fill="none" />
      </g>
      <path d={along(431, 511, 431, 1080)} stroke="#1414a0" strokeWidth="2" strokeDasharray="1 2" fill="none" />

      {/* left end of the rear wall */}
      <path d="M380 482L431 511L431 516L419 518V578L428 594L441 603V612L403 597z" fill="#1a1acc" />
      <path d="M380 482L392 494L397 540L400 553z" fill="#1e1ee8" />
      <path d="M419 518L427 521V579L436 594L428 594L419 578z" fill="#1717b8" />
      <path d="M383 490L431 516M397 524L419 533M400 540L419 547M397 543L419 556M399 562L419 572M403 597L419 584M429 595V610M437 598V611M393 491v6M400 495v6M408 499v6M416 503v6M424 507v6" fill="none" />

      {/* front wall, far pier */}
      <path d="M1313 342L1381 307L1402 317L1412 318L1406 343L1409 417L1391.500 427L1354 408L1330 365z" fill="#1c1cdc" />
      <path d="M1398 330L1412 318L1406 343L1409 417L1391.500 427z" fill="#1e1ef0" />
      <path d="M1364 347L1396 332L1391 395M1364 360L1393 375M1370 350V372L1392 385M1392 352L1407 340M1391 395L1354 408M1365 383L1391.500 427L1391 395M1391 378L1407 371M1392 395L1400 375L1408 388M1365 383V410M1400 325v97" fill="none" />
      <path d="M1366 354h8v4h-8zM1365 366l8-5v12l-8 4zM1365 379l5-2v5z" fill="#00ff00" stroke="none" />
      <path d="M1369 380l5-3 4 2 5-3" stroke="#c8c8c8" fill="none" />

      {/* front wall, ribs from far to near */}
      {range(15).map((k) => (
        <Rib key={k} x={1339.7 - 39.8 * k} y={430 + 21.5 * k} />
      ))}

      {/* front wall, top flange */}
      <path d="M731 659L1381 307L1402 317L1409 319L1396 331L761 672z" fill="#1414a0" />
      <path d="M818 612L1294 354L1317 365.500L842 622.500z" fill="#00cc00" stroke="none" />
      <path d={[5, 10, 15, 20].map((s) => along(731 + s, 659 + s * 0.5, 731 + s, 1381 + s)).join("")} fill="none" />
      <path d={range(17).map((i) => `M${1333.800 - 39.8 * i} ${332.500 + 21.500 * i}l30 14.500`).join("")} fill="none" />
      <path d={along(1313, 342, 1320, 1381)} stroke="#1414a0" strokeWidth="2" strokeDasharray="1 2" fill="none" />

      {/* front wall, near pier */}
      <path d="M727 667L731 658L761 671L777 666L772.500 762L755 770L716 748L720 740L733 733z" fill="#1a1ad0" />
      <path d="M758 690L763 671L777 666L772.500 762L755 770z" fill="#1d1dec" />
      <path d="M727 667L733 669V733L726 737z" fill="#1616b0" />
      <path d="M733 667h4v66h-4z" fill="#1414a0" />
      <path d="M734 699h3M734 704h3" stroke="#00ff00" strokeWidth="2" />
      <path d="M731 664L758 677M738 696L757 706M738 707L757 716M738 727L757 738L772 726M733 733L755 770L757 738M757 738L764 717L772 727M757 716L773 705M757 688L775 678M766 671L765 765M728 737V753M714 735h12l7-4v8l-12 4h-7z" fill="none" />
    </svg>
  )
}

/* ---------- floating panel ---------- */

function ControlPanel() {
  return (
    <section
      aria-label="Panneau"
      className="absolute top-[74px] right-[79px] flex h-[518px] w-[164px] flex-col border-2 border-t-[#e9edf6] border-r-[#85888f] border-b-[#85888f] border-l-[#e9edf6] bg-[#e4eaf4] p-0.5"
    >
      <div className="flex h-6 items-center justify-between bg-[#bac0ca] pr-0.5 pl-0.5 text-[11px] font-bold text-[#4b4b4b]">
        <h2>Panneau</h2>
        <button aria-label="Fermer le panneau"><X size={12} color="#5d6068" /></button>
      </div>
      <div className="flex min-h-0 flex-1 flex-col border border-r-2 border-b-[#7f838c] border-[#a9afba] bg-[#f0f0f0] px-1 pt-1 pb-2">
        <p className="mb-0.5 px-px font-['Liberation_Sans'] text-[11px] leading-4">Matériaux</p>
        <ul className="min-h-0 flex-1 overflow-hidden border-t border-l border-[#999] bg-white pt-px pl-1.5 text-[10px] leading-[18px] whitespace-nowrap">
          <li className="flex items-center gap-1.5">
            <span className="h-[14px] w-[15px] shrink-0 border border-[#ddd] bg-[#1919c8]" />
            1: Acier S 355 | EN 1993
          </li>
          <li className="flex items-center gap-1.5">
            <span className="h-[14px] w-[15px] shrink-0 border border-[#ddd] bg-[#00ff00]" />
            2: Acier S 460 NL | EN 19
          </li>
        </ul>
        <button aria-label="Couleurs" className="mt-1.5 flex h-5 w-[25px] items-center justify-center border border-[#adadad] bg-[#e1e1e1]">
          <svg width="16" height="16" viewBox="0 0 16 16">
            <path d="M1 2q3-2 6 0v9q-3 2-6 0z" fill="#ddd" stroke="#555" />
            <path d="M4 2v9" stroke="#6a4a34" strokeWidth="2" />
            <path d="M9 6h4l2 2v7H9z" fill="#fff" stroke="#777" />
            <path d="M10 10h4M10 12h4M8 2h5v2" stroke="#555" fill="none" />
          </svg>
        </button>
      </div>
      <div className="h-[22px] bg-[#cfd3dc] pl-1">
        <button aria-label="Légende des couleurs" className="flex h-5 w-6 items-center justify-center rounded-b border border-t-0 border-white bg-[#eef4f6]">
          <svg width="13" height="13" viewBox="0 0 13 13" shapeRendering="crispEdges">
            <path d="M0 0h13v3H0z" fill="#0000ff" stroke="#444" />
            <path d="M0 5h13v3H0z" fill="#00ff00" stroke="#444" />
            <path d="M0 10h13v3H0z" fill="#ff0000" stroke="#444" />
          </svg>
        </button>
      </div>
    </section>
  )
}

/* ---------- material table ---------- */

const columns: { l: string; a: string; b: ReactNode }[] = [
  { l: "A", a: "Description", b: "du matériau" },
  { l: "B", a: "Module d'élasticité", b: <>E [N/mm<sup className="text-[9px] leading-none">2</sup>]</> },
  { l: "C", a: "Module de cisaillem", b: <>G [N/mm<sup className="text-[9px] leading-none">2</sup>]</> },
  { l: "D", a: "Coefficient de Poiss", b: "ν [-]" },
  { l: "E", a: "Poids spécifique", b: <>γ [kN/m<sup className="text-[9px] leading-none">3</sup>]</> },
  { l: "F", a: "Coeff. de dilat. therm.", b: "α [1/°C]" },
  { l: "G", a: "Coefficient partiel", b: <>γ<span className="text-[9px]">M</span> [-]</> },
  { l: "H", a: "Modèle", b: "de matériau" },
  { l: "I", a: "", b: "Commentaire" },
]
const values = ["210000.0", "80769.2", "0.300", "78.50", "1.20E-05", "1.00"]

const sheets = [
  "Nœuds", "Lignes", "Matériaux", "Surfaces", "Solides", "Ouvertures", "Appuis nodaux", "Appuis linéiques", "Appuis de surface",
  "Articulations linéiques", "Épaisseurs variables", "Sections", "Articulations de barre", "Excentrement de barre", "Divisions de barre",
  "Barres", "Fondations élastiques de barre", "Non-linéarités de barre", "Ensembles de barres",
]

function MaterialTable() {
  const rowHead = "border border-[#6f6f6f] bg-[#e1e1e1] p-0 text-center font-normal text-[12px]"
  const cell = "border border-[#a0a0a0] bg-white p-0"
  return (
    <table className="w-full table-fixed border-collapse text-[11px] leading-[15px] whitespace-nowrap text-black">
      <colgroup>
        <col className="w-[45px]" />
        <col className="w-[222px]" />
        <col className="w-[102px]" />
        <col className="w-[96px]" />
        <col className="w-[96px]" />
        <col className="w-[96px]" />
        <col className="w-[102px]" />
        <col className="w-[96px]" />
        <col className="w-[192px]" />
        <col />
      </colgroup>
      <thead>
        <tr className="h-[15px]">
          <th rowSpan={2} className="border border-[#6f6f6f] bg-[#e1e1e1] p-0 pt-2 text-[11px] leading-[14px] font-normal">
            Matér.<br />n°
          </th>
          {columns.map((c) => (
            <th
              key={c.l}
              className={
                c.l === "A"
                  ? "border border-[#6f6f6f] bg-[#0078d7] p-0 text-[12px] leading-[14px] font-normal text-white"
                  : "border border-[#6f6f6f] bg-[#e1e1e1] p-0 text-[12px] leading-[14px] font-normal"
              }
            >
              {c.l}
            </th>
          ))}
        </tr>
        <tr className="h-[33px]">
          {columns.map((c) => (
            <th key={c.l} className="border border-[#a0a0a0] bg-[#f0f0f0] p-0 align-top leading-[13px] font-normal">
              <span className="mb-[3px] flex h-[13px] justify-center">{c.a}</span>
              <span className="block h-[13px]">{c.b}</span>
            </th>
          ))}
        </tr>
      </thead>
      <tbody>
        <tr className="h-4">
          <th className={rowHead}>2</th>
          <td className={cell}>
            <span className="flex items-center gap-1 pl-px">
              <span className="h-[13px] w-[13px] border border-[#333] bg-[#00ff00]" />
              Acier S 460 NL | EN 1993-1-1:2005-05
            </span>
          </td>
          {values.map((v) => (
            <td key={v} className={cell}><span className="block pr-[3px] text-right">{v}</span></td>
          ))}
          <td className={cell}><span className="block pl-1"><u>I</u>sotrope linéairement élastique</span></td>
          <td className={cell} />
        </tr>
        {[3, 4, 5].map((r) => (
          <tr key={r} className="h-4">
            <th className={rowHead}>{r}</th>
            {range(8).map((c) => <td key={c} className={cell} />)}
            <td className="border border-[#a0a0a0] bg-[#f0f0f0] p-0" />
          </tr>
        ))}
      </tbody>
    </table>
  )
}

function TablePane() {
  return (
    <section className="flex shrink-0 flex-col font-['Liberation_Sans',sans-serif]">
      <div className="flex h-5 items-center justify-between border-t border-[#f2f4f8] bg-[#bac0ca] pr-1 pl-1 font-['Noto_Sans',sans-serif] text-[11px] text-[#4b4b4b]">
        <h2>1.3 Matériaux</h2>
        <span className="flex items-center gap-1.5">
          <button aria-label="Épingler"><Pin /></button>
          <button aria-label="Fermer le tableau"><X size={12} color="#5d6068" /></button>
        </span>
      </div>
      <div className="flex h-[25px] items-center bg-gradient-to-b from-[#e9edf6] to-[#d0d4dd] pl-[9px]">
        <Tools items={tableBar} />
      </div>
      <div className="flex h-[130px] items-start border-t-2 border-l-2 border-[#7f838c] bg-[#f0f0f0] pt-px pr-1 pl-px">
        <div className="min-w-0 flex-1"><MaterialTable /></div>
        <div className="flex h-[112px] w-4 shrink-0 flex-col items-center">
          <span className="flex h-[26px] items-center"><ChevronUp size={12} strokeWidth={3} color="#505050" /></span>
          <span className="h-[31px] w-full bg-[#cdcdcd]" />
          <span className="mt-auto flex h-4 items-center"><ChevronDown size={12} strokeWidth={3} color="#505050" /></span>
        </div>
      </div>
      <div className="flex h-[36px] items-start border-t border-[#6f6f6f] bg-[#f0f0f0] text-[11px] leading-4 whitespace-nowrap text-black">
        <nav className="flex">
          {sheets.map((s) => (
            <button
              key={s}
              className={
                s === "Matériaux"
                  ? "h-[17px] border-r border-[#6f6f6f] bg-[#f0f0f0] px-[3px]"
                  : "h-[17px] rounded-br border-r border-b border-[#6f6f6f] bg-[#e1e1e1] px-[3px]"
              }
            >
              {s}
            </button>
          ))}
        </nav>
        <span className="ml-auto flex">
          {["M3 1v8M9 1L5 5l4 4z", "M8 1L4 5l4 4z", "M3 1l4 4-4 4z", "M2 1l4 4-4 4zM8 1v8"].map((d, i) => (
            <button key={d} aria-label={["Premier", "Précédent", "Suivant", "Dernier"][i]} className="flex h-4 w-4 items-center justify-center border border-t-white border-r-[#888] border-b-[#888] border-l-white">
              <svg width="10" height="10" viewBox="0 0 10 10"><path d={d} fill={i < 2 ? "#a0a0a0" : "#000"} stroke={i < 2 ? "#a0a0a0" : "#000"} /></svg>
            </button>
          ))}
        </span>
      </div>
    </section>
  )
}

/* ---------- window ---------- */

const menus: [string, string, string][] = [
  ["Fic", "h", "ier"], ["", "M", "odifier"], ["", "A", "fficher"], ["", "I", "nsérer"], ["", "C", "alculer"], ["", "R", "ésultats"],
  ["", "O", "utils"], ["", "T", "ableau"], ["O", "p", "tions"], ["Mod", "u", "les additionnels"], ["", "F", "enêtre"], ["Ai", "d", "e"],
]

export default function App() {
  return (
    <div className="flex h-screen flex-col overflow-hidden bg-[#cfd3dc] font-['Noto_Sans',sans-serif]">
      <header className="flex h-[23px] shrink-0 items-center bg-[#0078d7] text-[11px] text-white">
        <svg width="16" height="16" viewBox="0 0 16 16" className="mr-[5px] ml-0.5">
          <path d="M3 5l6-4 6 2v7l-6 5-6-3z" fill="#6b7a88" stroke="#26303a" />
          <path d="M9 7l6-4" stroke="#26303a" />
          <text x="0" y="14" fontSize="10" fontWeight="bold" fontFamily="Liberation Sans" fill="#ffd800">5</text>
        </svg>
        <h1>RFEM 5.25.00 x64 - [Pont canal de l'Ems (C))www.meyer-schubart.de]</h1>
        <div className="ml-auto flex pr-0.5">
          <button aria-label="Réduire la fenêtre" className="flex w-[46px] justify-center"><Minus size={12} strokeWidth={2} /></button>
          <button aria-label="Restaurer" className="flex w-[46px] justify-center">
            <svg width="11" height="11" viewBox="0 0 11 11" fill="none" stroke="#fff"><path d="M.5 2.500h8v8h-8zM2.500 2.500v-2h8v8h-2" /></svg>
          </button>
          <button aria-label="Fermer" className="flex w-[46px] justify-center"><X size={14} strokeWidth={1.5} /></button>
        </div>
      </header>

      <nav className="flex h-6 shrink-0 items-center text-[11px] text-[#4b4b4b]">
        <span className="mr-[3px] ml-1 h-3 border-l-2 border-dotted border-[#a3a8b4]" />
        <svg width="17" height="13" viewBox="0 0 17 13" className="mr-0.5">
          <path d="M0 0h17v13H0z" fill="#1c2a6c" />
          <path d="M0 9h17M5 9l3-7v10M8 2l8 7" stroke="#fff" strokeWidth="1.300" fill="none" />
        </svg>
        {menus.map(([a, k, b]) => (
          <button key={k + b} className="px-2">{a}<u>{k}</u>{b}</button>
        ))}
        <span className="ml-auto flex items-center gap-1.5 pt-1 pr-1">
          <button aria-label="Réduire le document"><Minus size={10} /></button>
          <button aria-label="Restaurer le document">
            <svg width="9" height="9" viewBox="0 0 9 9" fill="none" stroke="#4b4b4b"><path d="M.5 3.500h6v5h-6zM2.500 3V.5h6V6h-2" /></svg>
          </button>
          <button aria-label="Fermer le document"><X size={11} /></button>
        </span>
      </nav>

      <div className="flex h-[26px] shrink-0 gap-1">
        <Bar first>
          <Tools items={fileBar} />
          <div className="relative mx-0.5 flex h-[19px] w-[216px]">
            <select aria-label="Cas de charge" className="block w-full appearance-none bg-white px-1 text-[11px] leading-[19px] text-black">
              <option>CC1 - Eigengewicht</option>
            </select>
            <span className="pointer-events-none absolute top-px right-px flex h-[17px] w-[13px] items-center justify-center bg-[#dfe3ec]">
              <svg width="5" height="3" viewBox="0 0 5 3"><path d="M0 0h5L2.500 3z" fill="#6c6c6c" /></svg>
            </span>
          </div>
          <Tools items={loadBar} />
        </Bar>
        <Bar><Tools items={planeBar} /></Bar>
      </div>
      <div className="flex h-[26px] shrink-0 gap-1">
        <Bar first><Tools items={insertBar} /></Bar>
        <Bar><Tools items={viewBar} /></Bar>
        <Bar><Tools items={resultBar} /></Bar>
      </div>
      <div className="flex h-[26px] shrink-0 pl-[922px]">
        <Bar first><Tools items={exportBar} /></Bar>
      </div>

      <main className="flex min-h-0 flex-1 gap-[5px]">
        <Navigator />
        <div className="relative mb-1.5 min-w-0 flex-1 border-t-2 border-l border-[#6f737c] bg-white">
          <Model />
          <ControlPanel />
        </div>
      </main>

      <TablePane />

      <footer className="flex h-[21px] shrink-0 items-stretch border-t border-[#a3a8b0] bg-gradient-to-b from-[#d8dbe0] via-[#a9aeb8] to-[#b6b9c0] font-['Liberation_Sans',sans-serif] text-[11px] leading-[15px] whitespace-nowrap text-[#222]">
        <div className="ml-auto flex gap-0.5 pt-px">
          <button className="flex w-10 justify-center border border-r-white border-b-0 border-black">SAISIE</button>
          <button className="flex w-[42px] justify-center border border-t-white border-r-[#888] border-b-0 border-l-white">GRILLE</button>
          <button className="flex w-14 justify-center border border-r-white border-b-0 border-black">CARTES</button>
          <button className="flex w-[72px] justify-center border border-r-white border-b-0 border-black">SAISIE D'OB.</button>
          <button className="flex w-[52px] justify-center border border-r-white border-b-0 border-black">GLIGNES</button>
          <button className="flex w-7 justify-center border border-r-white border-b-0 border-black">DXF</button>
        </div>
        <div className="flex w-[499px] pl-px">
          <span className="w-[189px] border-x border-[#8f949e]" />
          <span className="w-[88px] border-r border-[#8f949e]" />
          <span className="w-[74px] border-r border-[#8f949e]" />
          <span className="w-[74px] border-r border-[#8f949e]" />
        </div>
      </footer>
    </div>
  )
}
